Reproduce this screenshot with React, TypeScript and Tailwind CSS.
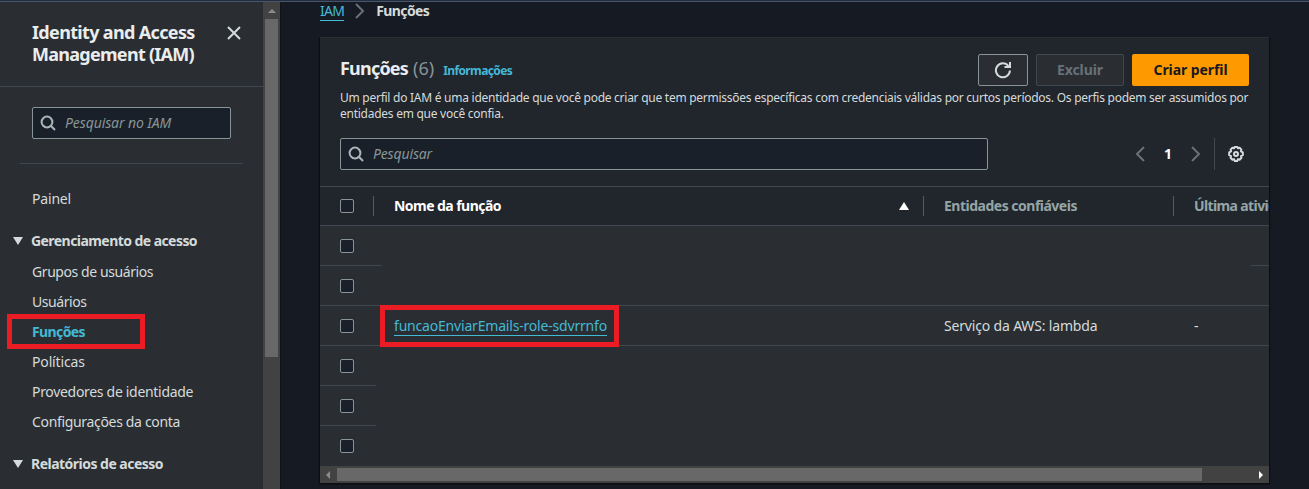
import type { ReactNode } from "react";

function SearchIcon() {
  return (
    <svg width="16" height="16" viewBox="0 0 16 16" fill="none" stroke="#aab7b8" strokeWidth="2" className="shrink-0">
      <circle cx="7" cy="7" r="5.4" />
      <path d="M10.8 10.8 L15 15" />
    </svg>
  );
}

function Chevron({ left = false }: { left?: boolean }) {
  return (
    <svg width="10" height="16" viewBox="0 0 10 16" fill="none" stroke="#687078" strokeWidth="2" className="shrink-0">
      <path d={left ? "M9 1 L2 8 L9 15" : "M1 1 L8 8 L1 15"} />
    </svg>
  );
}

function RefreshIcon() {
  return (
    <svg width="18" height="18" viewBox="0 0 18 18" fill="none" stroke="#d5dbdb" strokeWidth="2">
      <path d="M15.9 9.5 A7 7 0 1 1 14.4 5" />
      <path d="M16 1 V6 H10.5" />
    </svg>
  );
}

function GearIcon() {
  return (
    <svg width="16" height="16" viewBox="0 0 16 16" fill="none" stroke="#d5dbdb" strokeWidth="2" strokeLinejoin="round">
      <path d="M6.6 1 h2.8 l.6 1.3 1.6 -.5 1.8 1.8 -.5 1.7 1.9 1 v2.9 l-1.9 .9 .6 1.7 -1.9 1.9 -1.6 -.6 -.8 1.9 H6.8 l-.8 -1.9 -1.6 .6 -1.9 -1.9 .6 -1.7 -1.9 -.9 V6.3 l1.9 -1 -.5 -1.7 1.8 -1.8 1.6 .5 z" />
      <circle cx="8" cy="8" r="2" />
    </svg>
  );
}

function Checkbox() {
  return <span className="block h-3.5 w-3.5 shrink-0 rounded-[2px] border border-[#879596] bg-[#1a2029]" />;
}

function NavItem({ children, className }: { children: ReactNode; className: string }) {
  return <li className={"flex h-[30px] items-center pl-8 " + className}>{children}</li>;
}

function NavGroup({ children, className }: { children: ReactNode; className: string }) {
  return (
    <div className={"flex h-5 items-center pl-[13px] font-bold text-[#d5dbdb] " + className}>
      <svg width="10" height="8" viewBox="0 0 10 8" className="mr-2" fill="#d5dbdb">
        <path d="M0 0 H10 L5 8 Z" />
      </svg>
      {children}
    </div>
  );
}

function Sidebar() {
  return (
    <aside className="flex h-full w-[263px] shrink-0 flex-col overflow-hidden bg-[#2a2e33]">
      <div className="flex h-[85px] shrink-0 items-start justify-between border-b border-[#414750] pt-[19px] pr-[22px] pl-8">
        <h2 className="text-[18px] leading-[22px] font-bold text-[#eaeded]">
          <span className="block tracking-[-0.66px]">Identity and Access</span>
          <span className="block tracking-[-0.72px]">Management (IAM)</span>
        </h2>
        <svg width="14" height="14" viewBox="0 0 14 14" stroke="#d5dbdb" strokeWidth="2" className="mt-[5px]">
          <path d="M1 1 L13 13 M13 1 L1 13" />
        </svg>
      </div>
      <div className="mt-5 ml-8 flex h-8 w-[199px] shrink-0 items-center gap-[9px] rounded-[2px] border border-[#879596] bg-[#1a2029] pl-[7px]">
        <SearchIcon />
        <span className="tracking-[-0.11px] text-[#879596] italic">Pesquisar no IAM</span>
      </div>
      <div className="mt-6 ml-5 h-px w-[223px] shrink-0 bg-[#414750]" />
      <nav>
        <ul className="mt-5">
          <NavItem className="tracking-[-0.18px]">Painel</NavItem>
        </ul>
        <NavGroup className="mt-[17px] tracking-[-0.56px]">Gerenciamento de acesso</NavGroup>
        <ul className="mt-1.5">
          <NavItem className="tracking-[-0.42px]">Grupos de usuários</NavItem>
          <NavItem className="tracking-[-0.45px]">Usuários</NavItem>
          <NavItem className="relative font-bold tracking-[-0.61px] text-[#44b9d6]">
            Funções
            <span className="absolute top-[-3px] left-[7px] h-[35px] w-[138px] border-5 border-[#ec1c24]" />
          </NavItem>
          <NavItem className="tracking-[-0.15px]">Políticas</NavItem>
          <NavItem className="tracking-[-0.31px]">Provedores de identidade</NavItem>
          <NavItem className="tracking-[-0.33px]">Configurações da conta</NavItem>
        </ul>
        <NavGroup className="mt-[17px] tracking-[-0.52px]">Relatórios de acesso</NavGroup>
      </nav>
    </aside>
  );
}

function VerticalScrollbar() {
  return (
    <div className="flex w-[18px] shrink-0 flex-col items-center border-r border-[#101318] bg-[#424242]">
      <svg width="8" height="4" viewBox="0 0 8 4" fill="#8b8b8b" className="mt-[7px] shrink-0">
        <path d="M0 4 L4 0 L8 4 Z" />
      </svg>
      <div className="mt-1.5 h-[338px] w-[13px] shrink-0 bg-[#686868]" />
    </div>
  );
}

function HorizontalScrollbar() {
  return (
    <div className="flex h-[17px] items-center justify-between bg-[#424242] pr-1.5 pl-1.5">
      <svg width="4" height="8" viewBox="0 0 4 8" fill="#8b8b8b">
        <path d="M4 0 L0 4 L4 8 Z" />
      </svg>
      <div className="mr-auto ml-[7px] h-[13px] w-[865px] bg-[#686868]" />
      <svg width="4" height="8" viewBox="0 0 4 8" fill="#ffffff">
        <path d="M0 0 L4 4 L0 8 Z" />
      </svg>
    </div>
  );
}

function PanelHeader() {
  return (
    <header className="h-[148px] px-5">
      <div className="flex pt-4">
        <h1 className="flex h-[30px] items-center text-[18px] text-[#eaeded]">
          <span className="font-bold tracking-[-0.79px]">Funções</span>
          <span className="ml-[5px] text-[#879596]">(6)</span>
          <span className="mt-1 ml-[9px] text-xs font-bold tracking-[-0.61px] text-[#44b9d6]">Informações</span>
        </h1>
        <div className="ml-auto flex gap-2 font-bold">
          <button className="flex h-8 w-[50px] items-center justify-center rounded-[2px] border border-[#879596] bg-[#2a2e33]">
            <RefreshIcon />
          </button>
          <button className="h-8 w-[88px] rounded-[2px] border border-[#414750] bg-[#2a2e33] tracking-[-0.08px] text-[#687078]">
            Excluir
          </button>
          <button className="h-8 w-[117px] rounded-[2px] bg-[#ff9900] tracking-[-0.08px] text-[#16191f]">Criar perfil</button>
        </div>
      </div>
      <p className="mt-1 text-xs leading-4 whitespace-nowrap text-[#d5dbdb]">
        <span className="block tracking-[-0.26px]">
          Um perfil do IAM é uma identidade que você pode criar que tem permissões específicas com credenciais válidas por curtos
          períodos. Os perfis podem ser assumidos por
        </span>
        <span className="block tracking-[-0.26px]">entidades em que você confia.</span>
      </p>
      <div className="mt-4 flex h-8 items-center">
        <div className="flex h-8 w-[648px] items-center gap-[9px] rounded-[2px] border border-[#879596] bg-[#1a2029] pl-[7px]">
          <SearchIcon />
          <span className="tracking-[-0.15px] text-[#879596] italic">Pesquisar</span>
        </div>
        <div className="ml-auto flex items-center pr-[5px]">
          <Chevron left />
          <span className="w-[46px] text-center font-bold text-white">1</span>
          <Chevron />
          <span className="mr-[13px] ml-[13px] h-8 w-px bg-[#414750]" />
          <GearIcon />
        </div>
      </div>
    </header>
  );
}

const columns = "grid h-full grid-cols-[74px_550px_250px_75px] items-center";

function TableHead() {
  return (
    <div className="h-10 border-y border-[#414750] font-bold whitespace-nowrap">
      <div className={columns}>
        <div className="flex items-center justify-between pl-5">
          <Checkbox />
          <span className="mr-5 h-5 w-px bg-[#545b64]" />
        </div>
        <div className="flex items-center tracking-[-0.55px] text-white">
          Nome da função
          <svg width="10" height="8" viewBox="0 0 10 8" fill="#ffffff" className="ml-auto">
            <path d="M0 8 H10 L5 0 Z" />
          </svg>
          <span className="mr-5 ml-3.5 h-5 w-px bg-[#545b64]" />
        </div>
        <div className="flex items-center justify-between tracking-[-0.5px] text-[#95a5a6]">
          Entidades confiáveis
          <span className="mr-5 h-5 w-px bg-[#545b64]" />
        </div>
        <div className="overflow-hidden tracking-[-0.62px] text-[#95a5a6]">Última atividade</div>
      </div>
    </div>
  );
}

function EmptyRow({ children }: { children?: ReactNode }) {
  return (
    <div className="flex h-10 flex-col">
      <div className="flex flex-1 items-center pl-5">
        <Checkbox />
      </div>
      <div className="flex h-px justify-between">{children}</div>
    </div>
  );
}

function RolesPanel() {
  return (
    <section className="h-[446px] w-[949px] border-t border-[#2a2e33] bg-[#21252c] shadow-[0_1px_1px_#0b0e12,1px_1px_1px_#0b0e12,-1px_1px_1px_#0b0e12]">
      <PanelHeader />
      <TableHead />
      <div className="h-60 bg-[#2a2e33]">
        <EmptyRow>
          <span className="w-[62px] bg-[#414750]" />
          <span className="w-[18px] bg-[#414750]" />
        </EmptyRow>
        <EmptyRow>
          <span className="flex-1 bg-[#414750]" />
        </EmptyRow>
        <div className="h-10 border-b border-[#414750] whitespace-nowrap">
          <div className={columns}>
            <div className="pl-5">
              <Checkbox />
            </div>
            <div className="relative flex items-center">
              <a className="mt-0.5 border-b border-[#44b9d6] leading-[18px] tracking-[-0.19px] text-[#44b9d6]">
                funcaoEnviarEmails-role-sdvrrnfo
              </a>
              <span className="absolute top-[-10px] left-[-14px] h-[42px] w-[239px] border-5 border-[#ec1c24]" />
            </div>
            <div className="tracking-[-0.17px]">Serviço da AWS: lambda</div>
            <div>-</div>
          </div>
        </div>
        <EmptyRow>
          <span className="w-14 bg-[#414750]" />
        </EmptyRow>
        <EmptyRow>
          <span className="w-14 bg-[#414750]" />
        </EmptyRow>
        <EmptyRow />
      </div>
      <HorizontalScrollbar />
    </section>
  );
}

export default function App() {
  return (
    <div className="flex h-[489px] w-[1309px] flex-col overflow-hidden bg-[#161a22] font-['Noto_Sans',sans-serif] text-sm text-[#d5dbdb]">
      <div className="h-0.5 shrink-0 border-b border-[#47536a] bg-[#232f3e]" />
      <div className="flex min-h-0 flex-1">
        <Sidebar />
        <VerticalScrollbar />
        <main className="pl-[39px]">
          <div className="flex h-[35px] items-start">
            <a className="border-b border-[#44b9d6] leading-[18px] tracking-[-0.7px] text-[#44b9d6]">IAM</a>
            <span className="mt-px mr-[11px] ml-[11px]">
              <Chevron />
            </span>
            <span className="leading-[18px] font-bold tracking-[-0.61px] text-[#d5dbdb]">Funções</span>
          </div>
          <RolesPanel />
        </main>
      </div>
    </div>
  );
}
